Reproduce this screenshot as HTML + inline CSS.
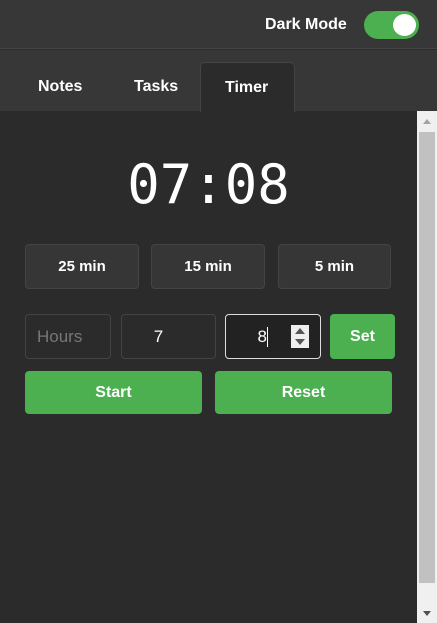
<!DOCTYPE html><html><head><style>
*{box-sizing:border-box;margin:0;padding:0}
body{width:437px;height:623px;background:#2b2b2b;font-family:"Liberation Sans",sans-serif;color:#fff;position:relative;overflow:hidden}
.abs{position:absolute}
.top{left:0;top:0;width:437px;height:49px;background:#373737;border-bottom:1px solid #444}
.tabs{left:0;top:50px;width:437px;height:61px;background:#373737}
.tab{position:absolute;top:38px;font-weight:bold;font-size:16px}
.btn{position:absolute;background:#363636;border:1px solid #444;border-radius:4px;display:flex;align-items:center;justify-content:center;font-weight:bold;font-size:15px}
.in{position:absolute;border:1px solid #444;border-radius:4px;display:flex;align-items:center;justify-content:center;font-size:17px}
.g{position:absolute;background:#4caf50;border-radius:4px;display:flex;align-items:center;justify-content:center;font-weight:bold;font-size:16px}
</style></head><body>
<div class="abs top"></div>
<div class="abs" style="left:265px;top:16px;font-size:16px;font-weight:bold">Dark Mode</div>
<div class="abs" style="left:364px;top:11px;width:55px;height:28px;border-radius:14px;background:#4caf50"></div>
<div class="abs" style="left:393px;top:14px;width:23px;height:22px;border-radius:50%;background:#fff"></div>
<div class="abs tabs">
<div class="tab" style="left:38px;top:28px">Notes</div>
<div class="tab" style="left:134px;top:28px">Tasks</div>
<div style="position:absolute;left:200px;top:12px;width:95px;height:50px;background:#2b2b2b;border:1px solid #444;border-bottom:none;border-radius:5px 5px 0 0"></div>
<div class="tab" style="left:225px;top:29px">Timer</div>
</div>
<div class="abs" style="left:0;top:150px;width:417px;text-align:center;font-family:'DejaVu Sans Mono',monospace;font-size:54px;line-height:70px">07:08</div>
<div class="btn" style="left:25px;top:244px;width:114px;height:45px">25 min</div>
<div class="btn" style="left:151px;top:244px;width:114px;height:45px">15 min</div>
<div class="btn" style="left:278px;top:244px;width:113px;height:45px">5 min</div>
<div class="in" style="left:25px;top:314px;width:86px;height:45px;color:#777;justify-content:flex-start;padding-left:11px">Hours</div>
<div class="in" style="left:121px;top:314px;width:95px;height:45px;padding-right:20px">7</div>
<div class="in" style="left:225px;top:314px;width:96px;height:45px;border:1px solid #ddd;background:#222;justify-content:flex-end;padding-right:52px">8<span style="display:inline-block;width:1px;height:20px;background:#fff"></span></div>
<div class="abs" style="left:291px;top:325px;width:18px;height:23px;background:#eee"></div>
<div class="abs" style="left:295px;top:328px;border:5px solid transparent;border-bottom:6px solid #555;border-top:none"></div>
<div class="abs" style="left:295px;top:339px;border:5px solid transparent;border-top:6px solid #555;border-bottom:none"></div>
<div class="g" style="left:330px;top:314px;width:65px;height:45px">Set</div>
<div class="g" style="left:25px;top:371px;width:177px;height:43px">Start</div>
<div class="g" style="left:215px;top:371px;width:177px;height:43px">Reset</div>
<div class="abs" style="left:417px;top:111px;width:20px;height:512px;background:#f0f0f0"></div>
<div class="abs" style="left:419px;top:132px;width:16px;height:451px;background:#c1c1c1"></div>
<div class="abs" style="left:423px;top:119px;border:4px solid transparent;border-bottom:5px solid #a3a3a3;border-top:none"></div>
<div class="abs" style="left:423px;top:611px;border:4px solid transparent;border-top:5px solid #505050;border-bottom:none"></div>
</body></html>
